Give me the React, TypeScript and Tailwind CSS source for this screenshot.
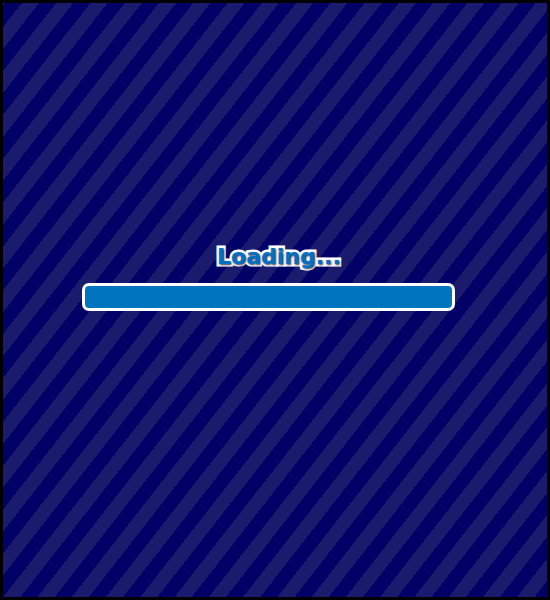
export default function App() {
  return (
    <div
      className="w-[550px] h-[600px] border-[3px] border-black flex flex-col"
      style={{
        backgroundImage:
          "repeating-linear-gradient(128deg, #1b1b6d 0px, #1b1b6d 1.4px, #000066 1.4px, #000066 14.9px, #1b1b6d 14.9px, #1b1b6d 27px)",
      }}
    >
      <div className="pt-[236px] pl-[214px]">
        <span
          className="text-[22px] font-bold text-[#0070c4] leading-[36px]"
          style={{
            fontFamily: '"DejaVu Sans", Verdana, sans-serif',
            WebkitTextStroke: "5px #ffffff",
            paintOrder: "stroke fill",
            textShadow: "1px 1px 2px rgba(0,0,40,0.8)",
          }}
        >
          Loading...
        </span>
      </div>
      <div className="ml-[79px] mt-[8px] w-[373px] h-[28px] rounded-[7px] border-[3px] border-white bg-[#0074bf]" />
    </div>
  );
}
